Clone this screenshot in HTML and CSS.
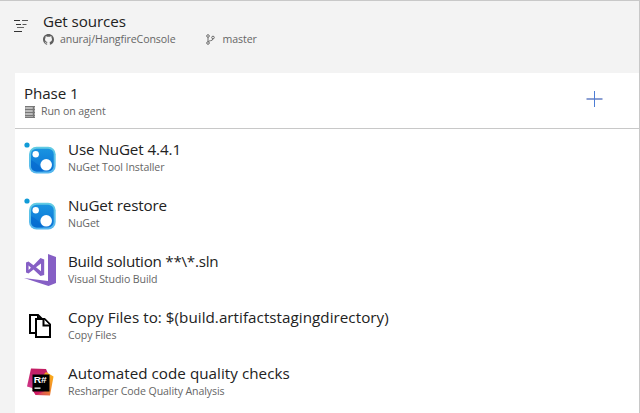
FILE: index.html
```html
<!DOCTYPE html>
<html lang="en">
<head>
<meta charset="utf-8">
<title>Build process</title>
<link rel="stylesheet" href="styles.css">
</head>
<body>
<svg width="0" height="0" class="defs">
  <defs>
    <linearGradient id="ng" x1="0" y1="0" x2="0" y2="1"><stop offset="0" stop-color="#1a94e0"/><stop offset="1" stop-color="#0a72d6"/></linearGradient>
    <linearGradient id="rim" x1="0" y1="0" x2="0" y2="1"><stop offset="0" stop-color="#62cce3"/><stop offset="1" stop-color="#54b5ee"/></linearGradient>
    <linearGradient id="pink" x1="0" y1="0" x2="0" y2="1"><stop offset="0" stop-color="#c21d62"/><stop offset="1" stop-color="#d0388c"/></linearGradient>
    <linearGradient id="orange" x1="1" y1="0" x2="0" y2="1"><stop offset="0" stop-color="#fdb515"/><stop offset=".45" stop-color="#f08a2c"/><stop offset="1" stop-color="#c92175"/></linearGradient>
    <symbol id="nuget" viewBox="0 0 32 32">
      <circle cx="3" cy="3" r="2.6" fill="#109bd7"/>
      <rect x="5" y="4.700" width="26.700" height="26.700" rx="7.5" fill="url(#rim)"/>
      <rect x="7" y="6.700" width="22.700" height="22.700" rx="5.5" fill="url(#ng)"/>
      <path d="M7 18Q15 22 19 29.4H12.5Q7 29.4 7 24Z" fill="#0568cd" opacity=".6"/>
      <circle cx="11.7" cy="12.2" r="3.2" fill="#fff"/>
      <circle cx="22.2" cy="22.8" r="5.8" fill="#fff"/>
    </symbol>
  </defs>
</svg>
<div class="panel">
  <header class="sources">
    <svg class="sources-icon" width="14" height="12" viewBox="0 0 14 12" stroke-width="1"><path d="M0 .5h6M2 4.500h5M0 11.500h8" stroke="#333"/><path d="M8 .5h6M8.5 4.500h4" stroke="#555"/><path d="M3 7.500h7" stroke="#666"/></svg>
    <div class="text">
      <h1 class="title"><span class="t0">Get sources</span></h1>
      <div class="meta">
        <svg class="github" width="11" height="11" viewBox="0 0 16 16" fill="#5f5f5f"><path d="M8 0C3.58 0 0 3.58 0 8c0 3.54 2.29 6.53 5.47 7.59.4.07.55-.17.55-.38v-1.49c-2.01.37-2.53-.49-2.69-.94-.09-.23-.48-.94-.82-1.13-.28-.15-.68-.52-.01-.53.63-.01 1.08.58 1.23.82.72 1.21 1.87.87 2.33.66.07-.52.28-.87.51-1.07-1.78-.2-3.64-.89-3.64-3.95 0-.87.31-1.59.82-2.15-.08-.2-.36-1.02.08-2.12 0 0 .67-.21 2.2.82A7.7 7.7 0 0 1 8 3.86c.68 0 1.36.09 2 .27 1.53-1.04 2.2-.82 2.2-.82.44 1.1.16 1.92.08 2.12.51.56.82 1.27.82 2.15 0 3.07-1.87 3.75-3.65 3.95.29.25.54.73.54 1.48v2.2c0 .21.15.46.55.38A8 8 0 0 0 16 8c0-4.42-3.58-8-8-8z"/></svg>
        <span class="s0">anuraj/HangfireConsole</span>
        <svg class="branch" width="9" height="11" viewBox="0 0 9 11" fill="none" stroke="#6b6b6b"><circle cx="2" cy="2" r="1.3"/><circle cx="2" cy="9" r="1.3"/><circle cx="7" cy="3.5" r="1.3"/><path d="M2 3.3v4.4M7 4.8Q6.8 6.5 4.5 6.7Q2.5 7 2.2 7.8"/></svg>
        <span class="s1">master</span>
      </div>
    </div>
  </header>
  <main class="tasks">
    <section class="phase">
      <div class="text">
        <h2 class="title"><span class="t1">Phase 1</span></h2>
        <div class="meta">
          <svg class="server" width="10" height="12" viewBox="0 0 10 12"><path d="M0 0h10v12H0z" fill="#aaa"/><path d="M0 .5h10M0 3.5h10M0 6.5h10M0 9.5h10M0 11.5h10" stroke="#777"/><path d="M1 2h6M1 5h6M1 8h6" stroke="#ccc"/><path d="M8.5 0v12" stroke="#777"/></svg>
          <span class="s2">Run on agent</span>
        </div>
      </div>
      <svg class="add" width="17" height="16" viewBox="0 0 17 16"><path d="M.5 8h16" stroke="#8b9fd3" stroke-width="2"/><path d="M8.5 0v16" stroke="#4c7dd5"/></svg>
    </section>
    <section class="task">
      <svg class="icon" width="32" height="32"><use href="#nuget"/></svg>
      <div class="text"><h2 class="title"><span class="t2">Use NuGet 4.4.1</span></h2><div class="meta"><span class="s3">NuGet Tool Installer</span></div></div>
    </section>
    <section class="task">
      <svg class="icon" width="32" height="32"><use href="#nuget"/></svg>
      <div class="text"><h2 class="title"><span class="t3">NuGet restore</span></h2><div class="meta"><span class="s4">NuGet</span></div></div>
    </section>
    <section class="task">
      <svg class="icon" width="32" height="32" viewBox="0 0 32 32"><path fill="#865fc5" fill-rule="evenodd" d="M24 0l8 3v26l-7.500 3L0 24l24 3zM2 8.500l2.500-1 5 3.700 7-7.200L20.200 5.500v15.500L16.500 22l-7-6.500-5 4-2.500-1zM4.600 11.500v4.500l2.300-2.200zM12 13.300l5 3.900V9.400z"/></svg>
      <div class="text"><h2 class="title"><span class="t4">Build solution **\*.sln</span></h2><div class="meta"><span class="s5">Visual Studio Build</span></div></div>
    </section>
    <section class="task">
      <svg class="icon" width="32" height="32" viewBox="0 0 32 32" fill="#fff" stroke="#000" stroke-width="2"><path d="M6 5h8l4 4v14H6z"/><path d="M13 5l6 6h-6z" fill="#000" stroke="none"/><path d="M12 9h8.500l5.500 5.500V27H12z"/><path d="M19.500 9v6.500H26"/></svg>
      <div class="text"><h2 class="title"><span class="t5">Copy Files to: $(build.artifactstagingdirectory)</span></h2><div class="meta"><span class="s6">Copy Files</span></div></div>
    </section>
    <section class="task">
      <svg class="icon" width="32" height="32" viewBox="0 0 32 32"><path d="M7 2.500l15 .5L25 10 15 24 3 20.500z" fill="url(#pink)"/><path d="M22 6l7.500 4.500L26 29.500 11.500 29 8 22z" fill="url(#orange)"/><path d="M8 24h15l-11 5z" fill="#d11c66"/><path d="M8.500 8.500h17v17h-17z"/><text class="logo" x="9.700" y="17" textLength="13" lengthAdjust="spacingAndGlyphs">R#</text><path d="M10.500 21.500h6v1.300h-6z" fill="#fff"/></svg>
      <div class="text"><h2 class="title"><span class="t6">Automated code quality checks</span></h2><div class="meta"><span class="s7">Resharper Code Quality Analysis</span></div></div>
    </section>
  </main>
</div>
</body>
</html>
```

FILE: styles.css
```css
* { box-sizing: border-box; }
body { margin: 0; font-family: "Open Sans", "Noto Sans", sans-serif; background: #f3f3f3; }
.defs { display: block; }
.panel { height: 413px; overflow: hidden; border-top: 1px solid #c8c8c8; border-right: 1px solid #c8c8c8; }
.sources { display: flex; height: 72px; padding: 10px 0 0 14px; }
.sources-icon { margin: 9px 15px 0 0; }
.title { margin: 0; height: 21px; line-height: 21px; font-size: 15.2px; font-weight: 400; color: #222; white-space: nowrap; }
.meta { display: flex; align-items: center; height: 15px; line-height: 15px; font-size: 10.6px; color: #666; white-space: nowrap; letter-spacing: -0.1px; }
.t0, .t1, .t2 { letter-spacing: -0.1px; }
.t3 { letter-spacing: -0.15px; }
.t4 { letter-spacing: -0.26px; }
.t5, .t6 { letter-spacing: 0.04px; }
.github { margin-right: 6px; }
.branch { margin: 0 8px 0 30px; }
.tasks { margin-left: 15px; height: 340px; background: #fff; }
.phase { display: flex; justify-content: space-between; height: 56px; padding: 10px 36px 0 9px; border-bottom: 1px solid #c8c8c8; }
.server { margin: 0 6px 0 1px; }
.add { margin-top: 8px; }
.task { display: flex; height: 56px; padding: 10px 0 0 9px; }
.icon { margin: 3px 12px 0 0; }
.logo { font: 700 9.4px "Liberation Sans", sans-serif; fill: #fff; }
```
